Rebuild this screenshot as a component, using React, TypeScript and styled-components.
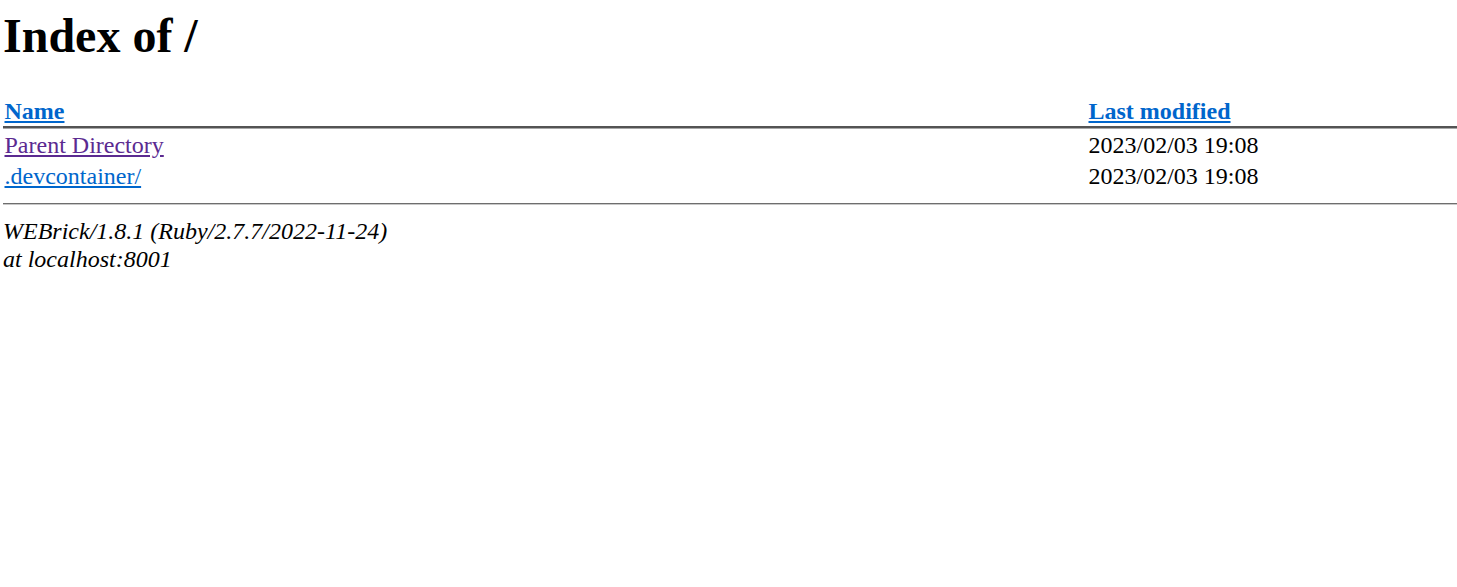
import React from "react";
import styled, { createGlobalStyle } from "styled-components";

const Global = createGlobalStyle`
  html, body { margin: 0; padding: 0; background: #fff; }
  body {
    padding: 0 0 0 3px;
    font-family: "Liberation Serif", "Times New Roman", serif;
    font-size: 24px;
    color: #000;
  }
`;

const Title = styled.h1`
  margin: 9px 0 0 0;
  font-size: 48px;
  font-weight: bold;
  line-height: 53px;
`;

const Listing = styled.table`
  width: 100%;
  border-collapse: collapse;
  margin-top: 34px;
`;

const HeadCell = styled.th<{ $w?: number }>`
  text-align: left;
  padding: 1.5px;
  line-height: 27px;
  font-weight: bold;
  border-bottom: 3px groove #a8a8a8;
  white-space: nowrap;
  ${(p) => (p.$w ? `width: ${p.$w}px;` : "")}
`;

const Cell = styled.td`
  text-align: left;
  padding: 1.5px;
  line-height: 28px;
  white-space: nowrap;
  overflow: hidden;
  text-overflow: ellipsis;
`;

const Link = styled.a<{ $visited?: boolean }>`
  color: ${(p) => (p.$visited ? "#5b2a91" : "#0066cc")};
  text-decoration: underline;
`;

const Rule = styled.hr`
  margin: 12px 0 0 0;
  border: 0;
  height: 0;
  border-top: 1.5px solid #6e6e6e;
  border-bottom: 1px solid #c8c8c8;
`;

const Address = styled.address`
  font-style: italic;
  line-height: 28px;
  margin-top: 12px;
`;

const rows = [
  { name: "Parent Directory", href: "..", mtime: "2023/02/03 19:08", visited: true },
  { name: ".devcontainer/", href: ".devcontainer/", mtime: "2023/02/03 19:08", visited: false },
];

export default function App() {
  return (
    <>
      <Global />
      <Title>Index of /</Title>
      <Listing>
        <thead>
          <tr>
            <HeadCell $w={1081}>
              <Link href="?N=D">Name</Link>
            </HeadCell>
            <HeadCell>
              <Link href="?M=D">Last modified</Link>
            </HeadCell>
          </tr>
        </thead>
        <tbody>
          {rows.map((r) => (
            <tr key={r.name}>
              <Cell>
                <Link href={r.href} $visited={r.visited}>
                  {r.name}
                </Link>
              </Cell>
              <Cell>{r.mtime}</Cell>
            </tr>
          ))}
        </tbody>
      </Listing>
      <Rule />
      <Address>
        WEBrick/1.8.1 (Ruby/2.7.7/2022-11-24)
        <br />
        at localhost:8001
      </Address>
    </>
  );
}
